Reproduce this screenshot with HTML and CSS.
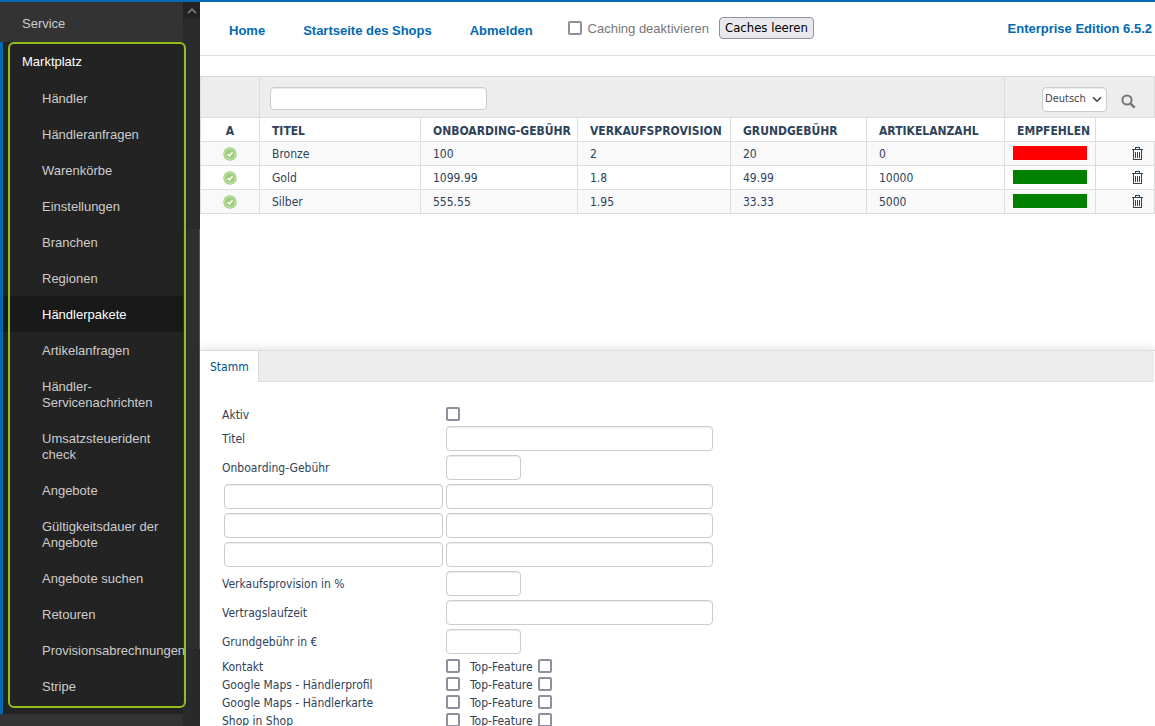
FILE: index.html
```html
<!DOCTYPE html>
<html lang="de">
<head>
  <meta charset="UTF-8">
  <meta name="viewport" content="width=device-width, initial-scale=1.0">
  <title>Händlerpakete</title>
  <link rel="stylesheet" href="styles.css">
</head>
<body>
  <aside class="sidebar">
    <nav class="menu">
      <a class="menu-head" href="#">Service</a>
      <div class="menu-group">
        <a class="menu-title" href="#">Marktplatz</a>
        <ul>
          <li><a href="#">Händler</a></li>
          <li><a href="#">Händleranfragen</a></li>
          <li><a href="#">Warenkörbe</a></li>
          <li><a href="#">Einstellungen</a></li>
          <li><a href="#">Branchen</a></li>
          <li><a href="#">Regionen</a></li>
          <li><a href="#" class="active">Händlerpakete</a></li>
          <li><a href="#">Artikelanfragen</a></li>
          <li><a href="#">Händler-<br>Servicenachrichten</a></li>
          <li><a href="#">Umsatzsteuerident<br>check</a></li>
          <li><a href="#">Angebote</a></li>
          <li><a href="#">Gültigkeitsdauer der<br>Angebote</a></li>
          <li><a href="#">Angebote suchen</a></li>
          <li><a href="#">Retouren</a></li>
          <li><a href="#">Provisionsabrechnungen</a></li>
          <li><a href="#">Stripe</a></li>
        </ul>
        <div class="highlight"></div>
      </div>
    </nav>
    <div class="scrollbar">
      <div class="scroll-up">
        <svg width="10" height="6" viewBox="0 0 10 6"><path d="M1 5.2 5 1.2 9 5.2" fill="none" stroke="#777" stroke-width="1.8"/></svg>
      </div>
      <div class="scroll-thumb"></div>
    </div>
  </aside>

  <main class="content">
    <header class="topbar">
      <nav class="toplinks">
        <a href="#">Home</a>
        <a href="#">Startseite des Shops</a>
        <a href="#">Abmelden</a>
      </nav>
      <form class="cache">
        <input type="checkbox" id="nocache">
        <label for="nocache">Caching deaktivieren</label>
        <button type="button">Caches leeren</button>
      </form>
      <span class="version">Enterprise Edition 6.5.2</span>
    </header>

    <section class="list">
      <table>
        <colgroup>
          <col class="c-active"><col class="c-title"><col class="c-onboard"><col class="c-provision">
          <col class="c-base"><col class="c-count"><col class="c-recommend"><col class="c-delete">
        </colgroup>
        <thead>
          <tr class="filter">
            <td></td>
            <td colspan="5"><input type="text" class="search" aria-label="Titel suchen"></td>
            <td colspan="2">
              <div class="filter-tools">
                <span class="select">
                  <select aria-label="Sprache"><option>Deutsch</option></select>
                  <svg width="10" height="7" viewBox="0 0 10 7"><path d="M1 1.2 5 5.2 9 1.2" fill="none" stroke="#444" stroke-width="1.6"/></svg>
                </span>
                <button type="button" class="icon-btn" aria-label="Suchen">
                  <svg width="15" height="15" viewBox="0 0 15 15" fill="none" stroke="#777"><circle cx="6" cy="6" r="4.6" stroke-width="2"/><path d="M9.3 9.3 13.6 13.6" stroke-width="2.5"/></svg>
                </button>
              </div>
            </td>
          </tr>
          <tr>
            <th class="center">A</th>
            <th>TITEL</th>
            <th>ONBOARDING-GEBÜHR</th>
            <th>VERKAUFSPROVISION</th>
            <th>GRUNDGEBÜHR</th>
            <th>ARTIKELANZAHL</th>
            <th>EMPFEHLEN</th>
            <th></th>
          </tr>
        </thead>
        <tbody id="packages"></tbody>
      </table>
    </section>

    <section class="detail">
      <div class="tabs"><a href="#" class="tab">Stamm</a></div>
      <form class="edit">
        <div class="row check-row"><label for="aktiv">Aktiv</label><input type="checkbox" id="aktiv"></div>
        <div class="row"><label for="titel">Titel</label><input type="text" id="titel"></div>
        <div class="row"><label for="onboarding">Onboarding-Gebühr</label><input type="text" id="onboarding" class="short"></div>
        <div class="row"><input type="text" class="key" aria-label="Name 1"><input type="text" aria-label="Wert 1"></div>
        <div class="row"><input type="text" class="key" aria-label="Name 2"><input type="text" aria-label="Wert 2"></div>
        <div class="row"><input type="text" class="key" aria-label="Name 3"><input type="text" aria-label="Wert 3"></div>
        <div class="row"><label for="provision">Verkaufsprovision in %</label><input type="text" id="provision" class="short"></div>
        <div class="row"><label for="laufzeit">Vertragslaufzeit</label><input type="text" id="laufzeit"></div>
        <div class="row"><label for="grund">Grundgebühr in €</label><input type="text" id="grund" class="short"></div>
        <div class="features">
          <div class="row"><label for="f1">Kontakt</label><input type="checkbox" id="f1"><label class="top" for="t1">Top-Feature</label><input type="checkbox" id="t1"></div>
          <div class="row"><label for="f2">Google Maps - Händlerprofil</label><input type="checkbox" id="f2"><label class="top" for="t2">Top-Feature</label><input type="checkbox" id="t2"></div>
          <div class="row"><label for="f3">Google Maps - Händlerkarte</label><input type="checkbox" id="f3"><label class="top" for="t3">Top-Feature</label><input type="checkbox" id="t3"></div>
          <div class="row"><label for="f4">Shop in Shop</label><input type="checkbox" id="f4"><label class="top" for="t4">Top-Feature</label><input type="checkbox" id="t4"></div>
        </div>
      </form>
    </section>
  </main>

  <script src="script.js"></script>
</body>
</html>
```
FILE: styles.css
```css
* {
  box-sizing: border-box;
}

body {
  margin: 0;
  height: 100vh;
  display: flex;
  overflow: hidden;
  border-top: 2px solid #0069b4;
  background: #fff;
  color: #2e4359;
  font-family: "DejaVu Sans Condensed", "Noto Sans", sans-serif;
  font-size: 12px;
  line-height: 16px;
}

a {
  text-decoration: none;
}

/* sidebar */
.sidebar {
  flex: 0 0 200px;
  min-width: 0;
  display: flex;
  background: #333;
  font-family: "Liberation Sans", Arial, sans-serif;
  font-size: 13px;
}

.menu {
  flex: 1;
  min-width: 0;
}

.menu a {
  display: block;
  color: #ccc;
}

.menu .menu-head {
  padding: 14px 22px 10px;
}

.menu-group {
  position: relative;
  padding-bottom: 10px;
  border-left: 3px solid #0069b4;
  background: #232323;
}

.menu .menu-title {
  padding: 12px 19px 10px;
  color: #fff;
}

.menu ul {
  margin: 0;
  padding: 0;
  list-style: none;
}

.menu li a {
  padding: 11px 0 9px 39px;
  white-space: nowrap;
}

.menu li .active {
  background: #191919;
  color: #fff;
}

.highlight {
  position: absolute;
  z-index: 1;
  top: 0;
  right: -3px;
  bottom: 6px;
  left: 5px;
  border: 2px solid #93bd1c;
  border-radius: 6px;
  pointer-events: none;
}

.scrollbar {
  flex: 0 0 17px;
  display: flex;
  flex-direction: column;
  background: #2a2a2c;
}

.scroll-up {
  height: 17px;
  display: flex;
  align-items: center;
  justify-content: center;
  background: #232323;
}

.scroll-thumb {
  height: 58%;
  margin-top: 210px;
  border-right: 1px solid #555;
  background: #2e2e2e;
}

/* right side */
.content {
  flex: 1;
  min-width: 0;
  display: grid;
  grid-template-rows: auto minmax(0, 39fr) minmax(0, 50fr);
}

.topbar {
  display: flex;
  align-items: center;
  height: 54px;
  padding: 0 3px 2px 29px;
  border-bottom: 1px solid #ddd;
  font-family: "Liberation Sans", Arial, sans-serif;
  font-size: 13px;
}

.toplinks {
  display: flex;
  gap: 38px;
  padding-top: 6px;
}

.toplinks a,
.version {
  color: #0069b4;
  font-weight: bold;
}

.version {
  margin-left: auto;
  padding-top: 2px;
}

.cache {
  display: flex;
  align-items: center;
  margin-left: 35px;
  color: #777;
}

.cache label {
  margin: 0 10px 0 6px;
  padding-top: 2px;
}

.cache button {
  height: 22px;
  padding: 0 5px;
  border: 1px solid #8f8f9d;
  border-radius: 4px;
  background: #e9e9ed;
  color: #000;
  font-family: "DejaVu Sans Condensed", "Noto Sans", sans-serif;
  font-size: 13px;
}

input[type=checkbox] {
  appearance: none;
  flex: none;
  width: 14px;
  height: 14px;
  margin: 0;
  border: 2px solid #8f8f9d;
  border-radius: 2px;
  background: #fff;
}

input[type=checkbox]:checked {
  background: #0069b4;
}

input[type=text],
select {
  border: 1px solid #ccc;
  border-radius: 4px;
  background: #fff;
  box-shadow: inset 0 1px 1px rgba(0, 0, 0, 0.08);
  color: #444;
  font: inherit;
}

/* package list */
.list {
  padding-top: 20px;
}

table {
  width: 100%;
  table-layout: fixed;
  border-collapse: collapse;
}

.c-active { width: 59px; }
.c-title { width: 161px; }
.c-onboard { width: 157px; }
.c-provision { width: 153px; }
.c-base { width: 136px; }
.c-count { width: 138px; }
.c-recommend { width: 91px; }
.c-delete { width: 59px; }

th,
td {
  height: 24px;
  padding: 0 0 0 12px;
  border: 1px solid #ddd;
  text-align: left;
  white-space: nowrap;
}

th {
  padding-top: 2px;
}

th:last-child {
  border-right: 0;
}

tbody tr:nth-child(odd) {
  background: #f9f9f9;
}

.filter td {
  height: 41px;
  padding: 2px 10px 0;
  background: #ededed;
}

.search {
  display: block;
  width: 217px;
  height: 23px;
}

.filter-tools {
  display: flex;
  align-items: center;
  justify-content: flex-end;
  gap: 9px;
  padding: 2px 4px 0 0;
}

.select {
  position: relative;
}

.select select {
  appearance: none;
  display: block;
  width: 65px;
  height: 25px;
  padding: 0 0 0 2px;
  font-size: 11px;
}

.select svg {
  position: absolute;
  top: 9px;
  right: 5px;
  pointer-events: none;
}

.icon-btn {
  display: flex;
  align-items: center;
  justify-content: center;
  width: 24px;
  height: 20px;
  margin-top: 4px;
  padding: 0;
  border: 0;
  background: none;
}

td.delete .icon-btn {
  width: 13px;
  margin: 0 10px 0 auto;
}

th.center {
  padding-left: 0;
  text-align: center;
}

td.center {
  padding: 0;
}

.center svg {
  display: block;
  margin: 0 auto;
}

td.recommend {
  padding: 0 8px 2px;
}

.bar {
  height: 14px;
}

.bar.no {
  background: #f00;
}

.bar.yes {
  background: #008000;
}

/* edit form */
.detail {
  border-top: 1px solid #ddd;
  box-shadow: 0 -2px 8px rgba(0, 0, 0, 0.1);
}

.tabs {
  display: flex;
  height: 31px;
  margin-right: 1px;
  border-bottom: 1px solid #ddd;
  background: #ededed;
}

.tab {
  height: 31px;
  padding: 8px 9px 0 10px;
  border-right: 1px solid #ddd;
  background: #fff;
  color: #004f87;
}

.edit {
  padding: 23px 22px 0;
}

.row {
  display: flex;
  align-items: center;
  height: 29px;
}

.row label {
  width: 224px;
  padding-top: 2px;
}

.row input[type=text] {
  flex: none;
  width: 267px;
  height: 25px;
}

.row input[type=text].short {
  width: 75px;
}

.row input[type=text].key {
  width: 219px;
  margin: 0 3px 0 2px;
}

.row.check-row {
  height: 19px;
}

.features {
  padding-top: 1px;
}

.features .row {
  height: 18px;
}

.row .top {
  width: 68px;
  margin-left: 10px;
}
```
FILE: script.js
```js
const packages = [
  { title: 'Bronze', onboarding: '100', provision: '2', base: '20', count: '0', recommend: false },
  { title: 'Gold', onboarding: '1099.99', provision: '1.8', base: '49.99', count: '10000', recommend: true },
  { title: 'Silber', onboarding: '555.55', provision: '1.95', base: '33.33', count: '5000', recommend: true }
];

const checkIcon = `<svg width="14" height="14" viewBox="0 0 14 14">
  <circle cx="7" cy="7" r="6.7" fill="#9ccc78"/>
  <circle cx="7" cy="7" r="5.2" fill="none" stroke="#d8edca" stroke-width="0.8"/>
  <path d="M4.6 7.2 6.4 8.9 9.5 5.3" fill="none" stroke="#fff" stroke-width="1.7"/>
</svg>`;

const trashIcon = `<svg width="11" height="13" viewBox="0 0 11 13" fill="none" stroke="#2e4359" shape-rendering="crispEdges">
  <path d="M3.5 2V.5h4V2M0 2.5h11M1.5 3v9.5h8V3M3.5 5v6M5.5 5v6M7.5 5v6"/>
</svg>`;

document.getElementById('packages').innerHTML = packages.map(p => `
  <tr>
    <td class="center">${checkIcon}</td>
    <td>${p.title}</td>
    <td>${p.onboarding}</td>
    <td>${p.provision}</td>
    <td>${p.base}</td>
    <td>${p.count}</td>
    <td class="recommend"><div class="bar ${p.recommend ? 'yes' : 'no'}"></div></td>
    <td class="delete"><button type="button" class="icon-btn" aria-label="${p.title} löschen">${trashIcon}</button></td>
  </tr>`).join('');
```
